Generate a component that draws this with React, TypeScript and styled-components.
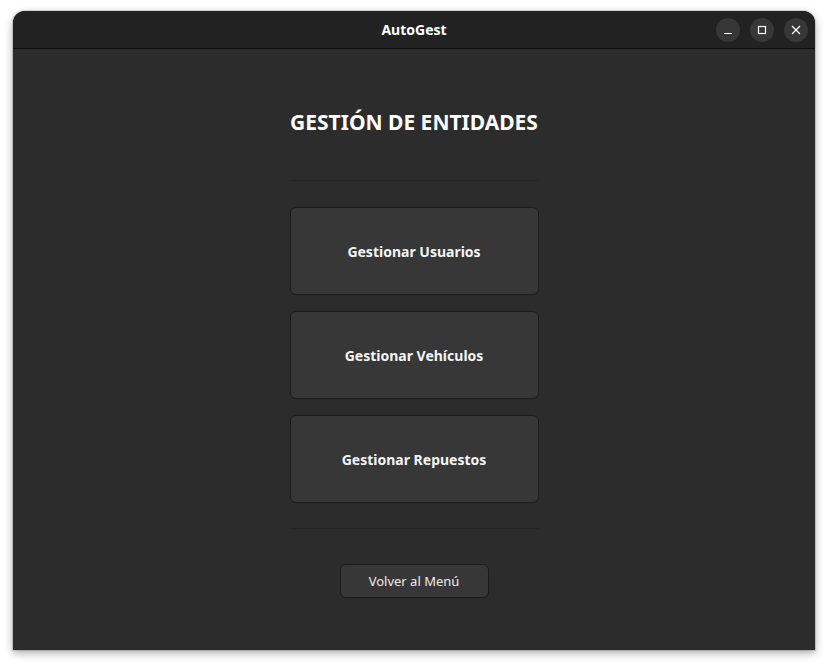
import React from 'react';
import styled, { createGlobalStyle } from 'styled-components';

const GlobalStyle = createGlobalStyle`
	html, body {
		margin: 0;
		padding: 0;
		background: #ffffff;
		font-family: "Noto Sans", "DejaVu Sans", sans-serif;
	}
`;

const Desktop = styled.div`
	width: 828px;
	height: 666px;
	padding: 11px 13px 0;
	box-sizing: border-box;
`;

const Window = styled.div`
	width: 802px;
	height: 639px;
	display: flex;
	flex-direction: column;
	border-radius: 12px 12px 0 0;
	overflow: hidden;
	background: #2c2c2c;
	box-shadow: 0 3px 9px rgba(0, 0, 0, 0.35), 0 0 0 1px rgba(0, 0, 0, 0.12);
`;

const TitleBar = styled.div`
	position: relative;
	height: 37px;
	flex-shrink: 0;
	display: flex;
	align-items: center;
	justify-content: center;
	background: #222222;
	border-bottom: 1px solid #0f0f0f;
`;

const Title = styled.span`
	color: #ffffff;
	font-size: 14px;
	font-weight: 700;
`;

const Controls = styled.div`
	position: absolute;
	right: 7px;
	top: 7px;
	display: flex;
	gap: 10px;
`;

const ControlButton = styled.div`
	width: 24px;
	height: 24px;
	border-radius: 50%;
	background: #373737;
	display: flex;
	align-items: center;
	justify-content: center;
`;

const Content = styled.div`
	flex: 1;
	display: flex;
	flex-direction: column;
	align-items: center;
	padding-top: 61px;
`;

const Column = styled.div`
	width: 249px;
	display: flex;
	flex-direction: column;
	align-items: center;
`;

const Heading = styled.h1`
	margin: 0;
	color: #ffffff;
	font-size: 21px;
	line-height: 24px;
	font-weight: 700;
	white-space: nowrap;
`;

const Separator = styled.div<{ $top: number; $bottom: number }>`
	align-self: stretch;
	height: 1px;
	background: #252525;
	margin: ${p => p.$top}px 0 ${p => p.$bottom}px;
`;

const Cards = styled.div`
	align-self: stretch;
	display: flex;
	flex-direction: column;
	gap: 16px;
`;

const Card = styled.button`
	height: 88px;
	box-sizing: border-box;
	border: 1px solid #1c1c1c;
	border-radius: 6px;
	background: #373737;
	color: #f4f4f4;
	font-family: inherit;
	font-size: 14px;
	font-weight: 700;
	cursor: pointer;
`;

const BackButton = styled.button`
	width: 149px;
	height: 34px;
	box-sizing: border-box;
	border: 1px solid #1c1c1c;
	border-radius: 6px;
	background: #373737;
	color: #ececec;
	font-family: inherit;
	font-size: 13px;
	cursor: pointer;
`;

const App: React.FC = () => {
	return (
		<>
			<GlobalStyle />
			<Desktop>
				<Window>
					<TitleBar>
						<Title>AutoGest</Title>
						<Controls>
							<ControlButton>
								<svg width="10" height="10" viewBox="0 0 10 10">
									<path d="M1 8.5h8" stroke="#fff" strokeWidth="1.2" />
								</svg>
							</ControlButton>
							<ControlButton>
								<svg width="10" height="10" viewBox="0 0 10 10">
									<rect x="1.5" y="1.5" width="7" height="7" fill="none" stroke="#fff" strokeWidth="1.2" />
								</svg>
							</ControlButton>
							<ControlButton>
								<svg width="10" height="10" viewBox="0 0 10 10">
									<path d="M1 1l8 8M9 1l-8 8" stroke="#fff" strokeWidth="1.2" />
								</svg>
							</ControlButton>
						</Controls>
					</TitleBar>
					<Content>
						<Column>
							<Heading>GESTIÓN DE ENTIDADES</Heading>
							<Separator $top={46} $bottom={26} />
							<Cards>
								<Card>Gestionar Usuarios</Card>
								<Card>Gestionar Vehículos</Card>
								<Card>Gestionar Repuestos</Card>
							</Cards>
							<Separator $top={25} $bottom={35} />
							<BackButton>Volver al Menú</BackButton>
						</Column>
					</Content>
				</Window>
			</Desktop>
		</>
	);
};

export default App;
